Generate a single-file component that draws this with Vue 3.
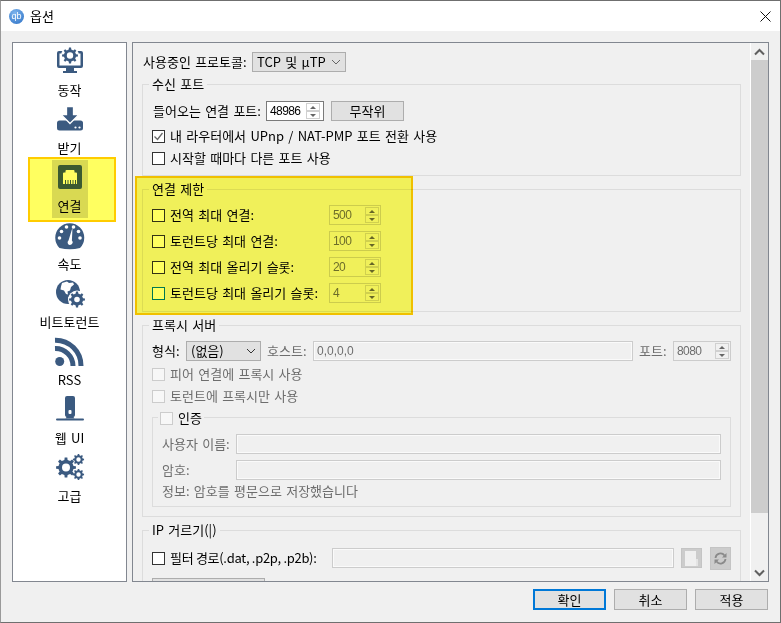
<script setup>
function gear(cx, cy, r, teeth, hole) {
  const inner = r * 0.76
  const step = (Math.PI * 2) / teeth
  let d = ''
  for (let i = 0; i < teeth; i++) {
    const a = i * step - Math.PI / 2
    const pts = [
      [inner, a - step * 0.5],
      [inner, a - step * 0.27],
      [r, a - step * 0.17],
      [r, a + step * 0.17],
      [inner, a + step * 0.27],
    ]
    for (const [rad, t] of pts) {
      d += (d ? 'L' : 'M') + (cx + rad * Math.cos(t)).toFixed(2) + ' ' + (cy + rad * Math.sin(t)).toFixed(2)
    }
  }
  d += 'Z'
  d += `M${cx - hole} ${cy}a${hole} ${hole} 0 1 0 ${hole * 2} 0a${hole} ${hole} 0 1 0 ${-hole * 2} 0Z`
  return d
}
const gears = {
  monitor: gear(16, 8.5, 8, 8, 3.2),
  torrent: gear(23, 20.5, 8, 8, 2.8),
  big: gear(12, 14.5, 10, 8, 4),
  top: gear(24.5, 6.5, 5.6, 8, 2.2),
  bottom: gear(24.5, 21.5, 5.6, 8, 2.2),
}
const limits = [
  { label: '전역 최대 연결:', value: '500' },
  { label: '토런트당 최대 연결:', value: '100' },
  { label: '전역 최대 올리기 슬롯:', value: '20' },
  { label: '토런트당 최대 올리기 슬롯:', value: '4', focus: true },
]
const gaugeDots = [[5.5, 17], [7.5, 10.5], [12.5, 6], [19.5, 6], [24.5, 10.5], [26, 17]]
</script>

<template>
  <div class="window">
    <header class="titlebar">
      <span class="logo">qb</span>
      <span class="title">옵션</span>
      <svg class="close" width="11" height="11" viewBox="0 0 11 11"><path d="M.5 .5l10 10M10.5 .5l-10 10" stroke="#111" fill="none" /></svg>
    </header>

    <div class="body">
      <div class="main">
        <nav class="sidebar">
          <div class="nav-item">
            <div class="nav-inner">
              <svg width="32" height="32" viewBox="0 0 32 32">
                <path class="ic" d="M5 4h22a2 2 0 0 1 2 2v13a2 2 0 0 1-2 2H20v3h3v2H9v-2h3v-3H5a2 2 0 0 1-2-2V6a2 2 0 0 1 2-2z" />
                <rect x="5.500" y="6.500" width="21" height="12" fill="#fff" />
                <circle cx="16" cy="8.500" r="9" fill="#fff" />
                <path class="ic" fill-rule="evenodd" :d="gears.monitor" />
              </svg>
              <span class="nav-label">동작</span>
            </div>
          </div>
          <div class="nav-item">
            <div class="nav-inner">
              <svg width="32" height="32" viewBox="0 0 32 32">
                <path class="ic" d="M3 18q0-2.500 2.500-2.500h21q2.500 0 2.500 2.500v5q0 2.500-2.500 2.500h-21Q3 25.500 3 23z" />
                <path class="ic" d="M12.500 1.500h7v8h5.500l-9 9-9-9h5.500z" stroke="#fff" stroke-width="1.300" />
                <circle cx="21.500" cy="22.500" r="1.100" fill="#fff" />
                <circle cx="25.500" cy="22.500" r="1.100" fill="#fff" />
              </svg>
              <span class="nav-label">받기</span>
            </div>
          </div>
          <div class="nav-item">
            <div class="nav-inner selected">
              <svg width="32" height="32" viewBox="0 0 32 32">
                <rect class="ic" x="4" y="2" width="24" height="24" rx="2" />
                <path fill="#fff" d="M12.500 7h7a1 1 0 0 1 1 1v1.500h1.500a1 1 0 0 1 1 1V21H9V10.500a1 1 0 0 1 1-1h1.500V8a1 1 0 0 1 1-1z" />
                <path d="M11.500 17v4M14 17v4M16.500 17v4M19 17v4M21.500 17v4" stroke="#3b5a80" stroke-width="1" fill="none" />
              </svg>
              <span class="nav-label">연결</span>
            </div>
          </div>
          <div class="nav-item">
            <div class="nav-inner">
              <svg width="32" height="32" viewBox="0 0 32 32">
                <path class="ic" d="M5.500 27A14.500 14.500 0 1 1 26 27Q16 29.500 5.500 27z" />
                <circle v-for="(p, i) in gaugeDots" :key="i" :cx="p[0]" :cy="p[1]" r="1.800" fill="#fff" />
                <path fill="#fff" d="M18.500 6.500l-.6 13a2.600 2.600 0 1 1-3.900 3.500 3 3 0 0 1 .6-3.700z" />
              </svg>
              <span class="nav-label">속도</span>
            </div>
          </div>
          <div class="nav-item">
            <div class="nav-inner">
              <svg width="32" height="32" viewBox="0 0 32 32">
                <circle class="ic" cx="14" cy="13" r="12" />
                <path fill="#fff" d="M8 4l5-1.500 2 1.500 4-.5 1 2-3 2.500-1 3.500-2.500 1 .5 3-2-.5-2-3.500-3.500-1 .5-3zM14 18l3 .5 1 3-2 2.500-1.500-3z" />
                <circle cx="23" cy="20.500" r="9" fill="#fff" />
                <path class="ic" fill-rule="evenodd" :d="gears.torrent" />
              </svg>
              <span class="nav-label">비트토런트</span>
            </div>
          </div>
          <div class="nav-item">
            <div class="nav-inner">
              <svg width="32" height="32" viewBox="0 0 32 32">
                <circle class="ic" cx="5.700" cy="24.500" r="4.500" />
                <path class="ic-line" d="M1 11.500A17.500 17.500 0 0 1 19 29" stroke-width="5" />
                <path class="ic-line" d="M1 3.200A25.500 25.500 0 0 1 27 29" stroke-width="5" />
              </svg>
              <span class="nav-label">RSS</span>
            </div>
          </div>
          <div class="nav-item">
            <div class="nav-inner">
              <svg width="32" height="32" viewBox="0 0 32 32">
                <path class="ic" d="M13 1h6a2 2 0 0 1 2 2v17a2 2 0 0 1-1.500 2l1 1.500h-9l1-1.500A2 2 0 0 1 11 20V3a2 2 0 0 1 2-2z" />
                <rect x="14.500" y="15" width="3" height="4" rx="1" fill="#fff" />
                <rect class="ic" x="2" y="23.500" width="28" height="2" rx="1" />
              </svg>
              <span class="nav-label">웹 UI</span>
            </div>
          </div>
          <div class="nav-item">
            <div class="nav-inner">
              <svg width="32" height="32" viewBox="0 0 32 32">
                <path class="ic" fill-rule="evenodd" :d="gears.big" />
                <path class="ic" fill-rule="evenodd" :d="gears.top" />
                <path class="ic" fill-rule="evenodd" :d="gears.bottom" />
              </svg>
              <span class="nav-label">고급</span>
            </div>
          </div>
        </nav>

        <section class="frame">
          <div class="pane">
            <div class="row protocol">
              <span class="lbl-proto">사용중인 프로토콜:</span>
              <div class="combo combo-proto"><span>TCP 및 µTP</span><svg width="10" height="6" viewBox="0 0 10 6"><path d="M1 1l4 4 4-4" fill="none" stroke="#666" /></svg></div>
            </div>

            <div class="group first">
              <div class="legend">수신 포트</div>
              <div class="row port-row">
                <span class="lbl-port-in">들어오는 연결 포트:</span>
                <div class="spin active port-spin">
                  <span class="spin-value">48986</span>
                  <span class="spin-btns"><i class="up"></i><i class="down"></i></span>
                </div>
                <button class="btn random" type="button">무작위</button>
              </div>
              <label class="check-row first-check">
                <span class="box"><svg width="11" height="11" viewBox="0 0 11 11"><path d="M1.500 5.500l3 3 5-6.500" fill="none" stroke="#666" stroke-width="1.300" /></svg></span>
                내 라우터에서 UPnp / NAT-PMP 포트 전환 사용
              </label>
              <label class="check-row"><span class="box"></span>시작할 때마다 다른 포트 사용</label>
            </div>

            <div class="group limit-group">
              <div class="legend">연결 제한</div>
              <div class="limit-rows">
                <div v-for="item in limits" :key="item.label" class="limit-row">
                  <label class="check-row">
                    <span class="box" :class="{ focus: item.focus }"></span>{{ item.label }}
                  </label>
                  <div class="spin off limit-spin">
                    <span class="spin-value">{{ item.value }}</span>
                    <span class="spin-btns"><i class="up"></i><i class="down"></i></span>
                  </div>
                </div>
              </div>
            </div>

            <div class="group proxy-group">
              <div class="legend">프록시 서버</div>
              <div class="row proxy-row">
                <span class="lbl-type">형식:</span>
                <div class="combo combo-type"><span>(없음)</span><svg width="10" height="6" viewBox="0 0 10 6"><path d="M1 1l4 4 4-4" fill="none" stroke="#333" /></svg></div>
                <span class="muted lbl-host">호스트:</span>
                <div class="input off grow">0,0,0,0</div>
                <span class="muted lbl-type">포트:</span>
                <div class="spin off proxy-spin">
                  <span class="spin-value">8080</span>
                  <span class="spin-btns"><i class="up"></i><i class="down"></i></span>
                </div>
              </div>
              <label class="check-row muted proxy-check"><span class="box off"></span>피어 연결에 프록시 사용</label>
              <label class="check-row muted"><span class="box off"></span>토런트에 프록시만 사용</label>

              <div class="group inner">
                <div class="legend check-legend"><span class="box off"></span>인증</div>
                <div class="row auth-row muted">
                  <span class="auth-label">사용자 이름:</span>
                  <div class="input off grow"></div>
                </div>
                <div class="row auth-row muted">
                  <span class="auth-label">암호:</span>
                  <div class="input off grow"></div>
                </div>
                <div class="info muted">정보: 암호를 평문으로 저장했습니다</div>
              </div>
            </div>

            <div class="group filter-group">
              <div class="legend">IP 거르기(|)</div>
              <div class="row filter-row">
                <label class="check-row filter-check"><span class="box"></span><span class="filter-text">필터 경로(.dat, .p2p, .p2b):</span></label>
                <div class="input off filter-input"></div>
                <span class="file-btn">
                  <svg width="13" height="15" viewBox="0 0 13 15"><path d="M0 0h11v15H0z" fill="#efefef" /><path d="M11 8h2v7h-2z" fill="#e4e4e4" /></svg>
                </span>
                <span class="reload-btn">
                  <svg width="13" height="13" viewBox="0 0 13 13"><path d="M1.500 6A5 5 0 0 1 10.500 3.500M11.500 7A5 5 0 0 1 2.500 9.500" fill="none" stroke="#8a8a8a" stroke-width="1.800" /><path d="M12.500 1v4.500H8zM.5 12V7.500H5z" fill="#8a8a8a" /></svg>
                </span>
              </div>
              <div class="stub-btn"></div>
            </div>
          </div>

          <aside class="scrollbar">
            <div class="sb-arrow"><svg width="11" height="8" viewBox="0 0 11 8"><path d="M1 6.500l4.500-4.500 4.500 4.500" fill="none" stroke="#606060" stroke-width="2" /></svg></div>
            <div class="sb-track"><div class="sb-thumb"></div></div>
            <div class="sb-arrow"><svg width="11" height="8" viewBox="0 0 11 8"><path d="M1 1.500l4.500 4.500 4.500-4.500" fill="none" stroke="#606060" stroke-width="2" /></svg></div>
          </aside>
        </section>
      </div>

      <footer class="actions">
        <button class="btn action default" type="button">확인</button>
        <button class="btn action" type="button">취소</button>
        <button class="btn action" type="button">적용</button>
      </footer>
    </div>

    <div class="mark mark-nav"></div>
    <div class="mark mark-limits"></div>
  </div>
</template>

<style scoped>
.window {
  position: relative;
  box-sizing: border-box;
  width: 781px;
  height: 623px;
  display: flex;
  flex-direction: column;
  background: #f0f0f0;
  border: 1px solid #6f6f6f;
  border-left-color: #9a9a9a;
  font-family: "Noto Sans CJK KR", "Liberation Sans", sans-serif;
  font-size: 13px;
  line-height: 18px;
  word-spacing: 1.4px;
  color: #000;
  overflow: hidden;
}
.titlebar {
  flex: none;
  height: 30px;
  background: #fff;
  display: flex;
  align-items: center;
  padding: 0 9px 0 8px;
}
.logo {
  width: 15px;
  height: 15px;
  border-radius: 50%;
  background: radial-gradient(circle at 40% 30%, #7fb6ee, #2a6fc4);
  color: #fff;
  font-family: "Liberation Sans", sans-serif;
  font-size: 9px;
  line-height: 14px;
  text-align: center;
}
.title { margin-left: 6px; }
.close { margin-left: auto; }

.body {
  flex: 1;
  display: flex;
  flex-direction: column;
  padding: 11px 11px 0 11px;
  min-height: 0;
}
.main {
  height: 540px;
  display: flex;
  gap: 5px;
}
.sidebar {
  box-sizing: border-box;
  width: 115px;
  flex: none;
  background: #fff;
  border: 1px solid #828790;
  padding-top: 1px;
  display: flex;
  flex-direction: column;
}
.nav-item {
  height: 58px;
  display: flex;
  justify-content: center;
}
.nav-inner {
  min-width: 36px;
  box-sizing: border-box;
  height: 58px;
  padding-top: 3px;
  display: flex;
  flex-direction: column;
  align-items: center;
}
.nav-inner.selected { background: #d9d9d9; }
.nav-inner svg { display: block; flex: none; }
.nav-label { margin-top: 2px; white-space: nowrap; }
.ic { fill: #3b5a80; }
.ic-line { fill: none; stroke: #3b5a80; }

.frame {
  box-sizing: border-box;
  flex: 1;
  min-width: 0;
  display: flex;
  border: 1px solid #828790;
  background: #f0f0f0;
  overflow: hidden;
}
.pane {
  flex: 1;
  min-width: 0;
  box-sizing: border-box;
  padding: 9px 9px 0 9px;
  overflow: hidden;
}
.scrollbar {
  flex: none;
  width: 18px;
  box-sizing: border-box;
  border-left: 1px solid #fff;
  display: flex;
  flex-direction: column;
}
.sb-arrow {
  height: 17px;
  flex: none;
  display: flex;
  align-items: center;
  justify-content: center;
}
.sb-track { flex: 1; min-height: 0; }
.sb-thumb { height: 453px; background: #cdcdcd; }

.row {
  display: flex;
  align-items: center;
  height: 20px;
  white-space: nowrap;
}
.protocol { gap: 6px; padding-left: 1px; }
.lbl-proto { width: 103px; flex: none; }
.muted { color: #6d6d6d; }

.group {
  box-sizing: border-box;
  border: 1px solid #dcdcdc;
  padding: 0 9px 0 9px;
  margin-top: 13px;
}
.group.first { margin-top: 12px; padding-bottom: 7px; }
.legend {
  width: fit-content;
  height: 18px;
  line-height: 16px;
  margin: -9px 0 0 -3px;
  padding: 0 3px;
  background: #f0f0f0;
}
.port-row { margin-top: 7px; padding-left: 1px; }
.lbl-port-in { width: 113px; flex: none; }
.check-row {
  display: flex;
  align-items: center;
  height: 20px;
  white-space: nowrap;
}
.first-check { margin-top: 5px; margin-bottom: 2px; }
.box {
  box-sizing: border-box;
  width: 13px;
  height: 13px;
  flex: none;
  margin-right: 5px;
  background: #fff;
  border: 1px solid #333;
  display: flex;
  align-items: center;
  justify-content: center;
}
.box svg { display: block; }
.box.focus { border-color: #0078d7; }
.box.off { background: #f7f7f7; border-color: #cccccc; }

.spin {
  box-sizing: border-box;
  height: 20px;
  display: flex;
  align-items: center;
  justify-content: space-between;
  padding: 0 1px 0 3px;
  border: 1px solid #7a7a7a;
}
.spin.active { background: #fff; }
.spin.off {
  border-color: #cccccc;
  color: #6d6d6d;
}
.spin-value {
  font-family: "Liberation Sans", sans-serif;
  font-size: 12px;
  letter-spacing: -0.6px;
}
.port-spin { width: 58px; padding-right: 3px; }
.limit-spin { width: 52px; }
.proxy-spin { width: 58px; }
.spin-btns {
  display: flex;
  flex-direction: column;
  gap: 0;
}
.spin-btns i {
  box-sizing: border-box;
  display: flex;
  align-items: center;
  justify-content: center;
  width: 14px;
  height: 8px;
  border: 1px solid #d0d0d0;
}
.spin-btns i::after {
  content: "";
  width: 0;
  height: 0;
  border-left: 3px solid transparent;
  border-right: 3px solid transparent;
}
.spin-btns .up::after { border-bottom: 3px solid #666; }
.spin-btns .down::after { border-top: 3px solid #666; }

.btn {
  box-sizing: border-box;
  font: inherit;
  word-spacing: inherit;
  color: #000;
  background: #e1e1e1;
  border: 1px solid #adadad;
  padding: 0;
}
.random { width: 73px; height: 20px; margin-left: 7px; }

.limit-rows {
  margin-top: 6px;
  padding-bottom: 8px;
  display: flex;
  flex-direction: column;
  gap: 6px;
}
.limit-row {
  display: flex;
  align-items: center;
  justify-content: space-between;
  width: 229px;
  height: 20px;
}

.combo {
  box-sizing: border-box;
  height: 20px;
  background: #e1e1e1;
  border: 1px solid #adadad;
  display: flex;
  align-items: center;
  justify-content: space-between;
  padding: 0 4px 0 4px;
  flex: none;
}
.combo-proto { width: 94px; }
.combo-type { width: 75px; }
.proxy-row { margin-top: 6px; gap: 6px; }
.lbl-type { width: 28px; flex: none; }
.lbl-host { width: 40px; flex: none; }
.input {
  box-sizing: border-box;
  height: 20px;
  padding: 0 3px;
  line-height: 18px;
  font-family: "Liberation Sans", sans-serif;
  font-size: 12px;
  color: #6d6d6d;
  background: #f0f0f0;
}
.input.off { border: 1px solid #cccccc; box-shadow: inset 0 0 0 1px #fafafa; }
.grow { flex: 1; min-width: 0; }
.proxy-check { margin-top: 3px; margin-bottom: 2px; }

.group.proxy-group { padding-bottom: 9px; }
.group.inner {
  margin-top: 11px;
  padding-bottom: 6px;
}
.legend.check-legend {
  display: flex;
  align-items: center;
  margin-left: -9px;
  padding: 0 2px 0 7px;
  background: linear-gradient(#f0f0f0, #f0f0f0) no-repeat 5px 0 / 100% 100%;
}
.auth-row { margin-top: 7px; }
.auth-row + .auth-row { margin-top: 6px; }
.auth-label { width: 74px; flex: none; }
.info { margin-top: 2px; height: 18px; }

.filter-row { margin-top: 8px; }
.filter-check { width: 180px; flex: none; }
.filter-text { letter-spacing: -0.3px; word-spacing: 0; }
.filter-input { width: 342px; flex: none; }
.file-btn {
  box-sizing: border-box;
  width: 21px;
  height: 20px;
  margin-left: 7px;
  background: #cccccc;
  border: 1px solid #c4c4c4;
  display: flex;
  align-items: center;
  justify-content: center;
}
.reload-btn {
  box-sizing: border-box;
  width: 21px;
  height: 23px;
  margin-left: 8px;
  background: #cccccc;
  border: 1px solid #c4c4c4;
  display: flex;
  align-items: center;
  justify-content: center;
}
.stub-btn {
  box-sizing: border-box;
  width: 113px;
  height: 22px;
  margin-top: 10px;
  background: #e1e1e1;
  border: 1px solid #adadad;
}

.actions {
  display: flex;
  justify-content: flex-end;
  gap: 8px;
  margin-top: 7px;
  padding-right: 1px;
}
.action { width: 73px; height: 21px; }
.action.default { border: 2px solid #0078d7; }

.mark {
  position: absolute;
  box-sizing: border-box;
  background: #ffff60;
  border: 2px solid #ffcc00;
  mix-blend-mode: multiply;
  pointer-events: none;
}
.mark-nav { left: 27px; top: 156px; width: 88px; height: 65px; }
.mark-limits { left: 134px; top: 175px; width: 278px; height: 139px; }
</style>

<style>
html, body { background: #f0f0f0; }
</style>
